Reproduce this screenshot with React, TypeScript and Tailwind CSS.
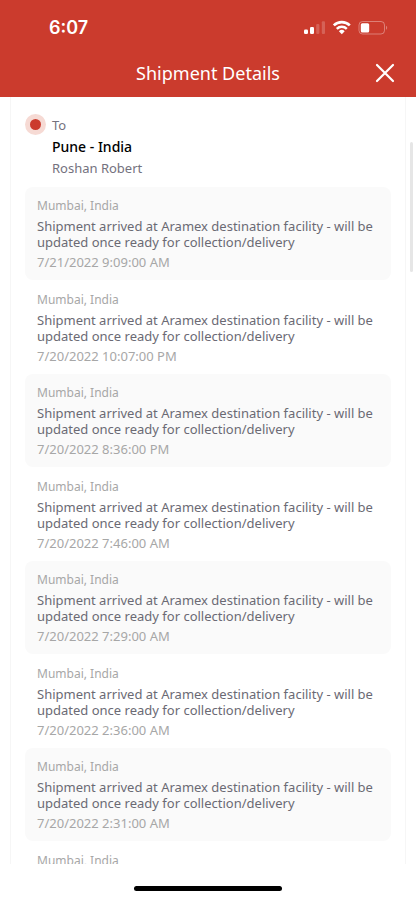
import React from 'react';

const DESCRIPTION = 'Shipment arrived at Aramex destination facility - will be updated once ready for collection/delivery';

const events = [
  { location: 'Mumbai, India', description: DESCRIPTION, date: '7/21/2022 9:09:00 AM' },
  { location: 'Mumbai, India', description: DESCRIPTION, date: '7/20/2022 10:07:00 PM' },
  { location: 'Mumbai, India', description: DESCRIPTION, date: '7/20/2022 8:36:00 PM' },
  { location: 'Mumbai, India', description: DESCRIPTION, date: '7/20/2022 7:46:00 AM' },
  { location: 'Mumbai, India', description: DESCRIPTION, date: '7/20/2022 7:29:00 AM' },
  { location: 'Mumbai, India', description: DESCRIPTION, date: '7/20/2022 2:36:00 AM' },
  { location: 'Mumbai, India', description: DESCRIPTION, date: '7/20/2022 2:31:00 AM' },
  { location: 'Mumbai, India', description: '', date: '' },
];

function StatusIcons() {
  return (
    <svg width="84" height="16" viewBox="0 0 84 16" fill="none" aria-hidden="true">
      {/* Signal */}
      <rect x="0" y="9.5" width="4" height="4.5" rx="1.2" fill="#fff" />
      <rect x="6" y="7" width="4" height="7" rx="1.2" fill="#fff" />
      <rect x="12.2" y="4" width="3.2" height="10" rx="1" fill="#fff" fillOpacity="0.2" />
      <rect x="17.8" y="1.2" width="3.2" height="12.8" rx="1" fill="#fff" fillOpacity="0.2" />
      {/* Wifi */}
      <path d="M29.8 5.4a11.4 11.4 0 0 1 16 0" stroke="#fff" strokeWidth="2.6" />
      <path d="M32.8 8.8a7.2 7.2 0 0 1 10 0" stroke="#fff" strokeWidth="2.5" />
      <path d="M34.9 11.2a4.2 4.2 0 0 1 5.8 0L37.8 14.2z" fill="#fff" />
      {/* Battery */}
      <rect x="55" y="1.5" width="25.5" height="12.5" rx="3.5" stroke="#fff" strokeOpacity="0.35" />
      <rect x="56.8" y="3.2" width="8.4" height="9.2" rx="1.5" fill="#fff" />
      <path d="M82 5.8c1.6.6 1.6 3.4 0 4z" fill="#fff" fillOpacity="0.35" />
    </svg>
  );
}

export default function App() {
  return (
    <div className="flex h-screen flex-col overflow-hidden bg-white font-['Noto_Sans',sans-serif]">
      <header className="shrink-0 bg-[#cb3b2d] text-white">
        <div className="flex items-center justify-between pt-4 pr-7 pl-[49px]">
          <span className="font-['Inter',sans-serif] text-lg leading-6 font-semibold">6:07</span>
          <StatusIcons />
        </div>
        <div className="grid grid-cols-[40px_1fr_40px] items-center px-[11px] pt-[13px] pb-1">
          <h1 className="col-start-2 text-center text-lg leading-6">Shipment Details</h1>
          <button type="button" aria-label="Close" className="flex h-10 items-center justify-center">
            <svg width="20" height="20" viewBox="0 0 20 20" fill="none" stroke="#fff" strokeWidth="2.2" strokeLinecap="round">
              <path d="M2 2l16 16M18 2L2 18" />
            </svg>
          </button>
        </div>
      </header>

      <main className="relative min-h-0 flex-1 overflow-hidden px-[10px]">
        <div className="border-x border-[#f6f6f6] px-[14px]">
          <section className="flex gap-[6px] pt-[17px] pb-[9px]">
            <span className="flex size-[21px] items-center justify-center rounded-full bg-[#f6dad4]">
              <span className="size-[11px] rounded-full bg-[#cb3b2d]" />
            </span>
            <div>
              <p className="text-[13px] leading-[22px] text-[#74727e]">To</p>
              <h2 className="text-sm leading-[22px] font-medium text-black">Pune - India</h2>
              <p className="text-[13px] leading-5 text-[#74727e]">Roshan Robert</p>
            </div>
          </section>

          <ul>
            {events.map((event, i) => (
              <li key={i} className="rounded-lg px-3 pt-[11px] pb-[10px] text-[13px] leading-4 odd:mb-px odd:bg-[#fafafa]">
                <p className="text-xs leading-4 text-[#a7a7a7]">{event.location}</p>
                <p className="mt-1 text-[#6b6a74]">{event.description}</p>
                <p className="mt-1 text-[#a7a7a7]">{event.date}</p>
              </li>
            ))}
          </ul>
        </div>
        <div className="absolute top-[45px] right-[3px] h-[130px] w-[3px] rounded-full bg-[#e6e6e6]" />
      </main>

      <footer className="flex h-9 shrink-0 items-end justify-center pb-[9px]">
        <div className="h-[5px] w-[148px] rounded-full bg-black" />
      </footer>
    </div>
  );
}
